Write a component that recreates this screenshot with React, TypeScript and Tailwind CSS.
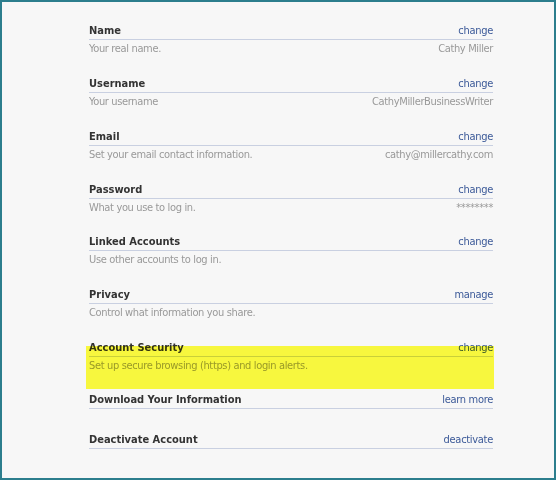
type Row = {
  title: string;
  action: string;
  desc?: string;
  value?: string;
  mb?: string;
};

const rows: Row[] = [
  { title: "Name", action: "change", desc: "Your real name.", value: "Cathy Miller", mb: "mb-[21px]" },
  { title: "Username", action: "change", desc: "Your username", value: "CathyMillerBusinessWriter", mb: "mb-[21px]" },
  { title: "Email", action: "change", desc: "Set your email contact information.", value: "cathy@millercathy.com", mb: "mb-[21px]" },
  { title: "Password", action: "change", desc: "What you use to log in.", value: "********", mb: "mb-[20px]" },
  { title: "Linked Accounts", action: "change", desc: "Use other accounts to log in.", mb: "mb-[21px]" },
  { title: "Privacy", action: "manage", desc: "Control what information you share.", mb: "mb-[21px]" },
  { title: "Account Security", action: "change", desc: "Set up secure browsing (https) and login alerts.", mb: "mb-[20px]" },
  { title: "Download Your Information", action: "learn more", mb: "mb-[24px]" },
  { title: "Deactivate Account", action: "deactivate" },
];

function SettingRow({ row }: { row: Row }) {
  return (
    <div className={row.mb}>
      {/* header line */}
      <div className="flex items-end justify-between border-b border-[#c9d0e1] pb-[1px] leading-[14px]">
        <span className="font-bold text-[#333333]">{row.title}</span>
        <span className="tracking-[-0.3px] text-[#3b5998]">{row.action}</span>
      </div>
      {row.desc && (
        <div className="flex justify-between pt-[2px] leading-[14px] tracking-[-0.35px] text-[#999999]">
          <span>{row.desc}</span>
          {row.value && <span>{row.value}</span>}
        </div>
      )}
    </div>
  );
}

export default function App() {
  return (
    <div
      className="relative h-[480px] w-[556px] border-2 border-[#2c7e8d] bg-[#f7f7f7] text-[11px]"
      style={{ fontFamily: '"DejaVu Sans Condensed", "DejaVu Sans", sans-serif' }}
    >
      <div className="ml-[87px] w-[404px] pt-[22px]">
        {rows.map((r) => (
          <SettingRow key={r.title} row={r} />
        ))}
      </div>

      {/* yellow highlighter mark over Account Security */}
      <div className="pointer-events-none absolute left-[84px] top-[344px] h-[43px] w-[408px] bg-[#ffff40] mix-blend-multiply" />
    </div>
  );
}
